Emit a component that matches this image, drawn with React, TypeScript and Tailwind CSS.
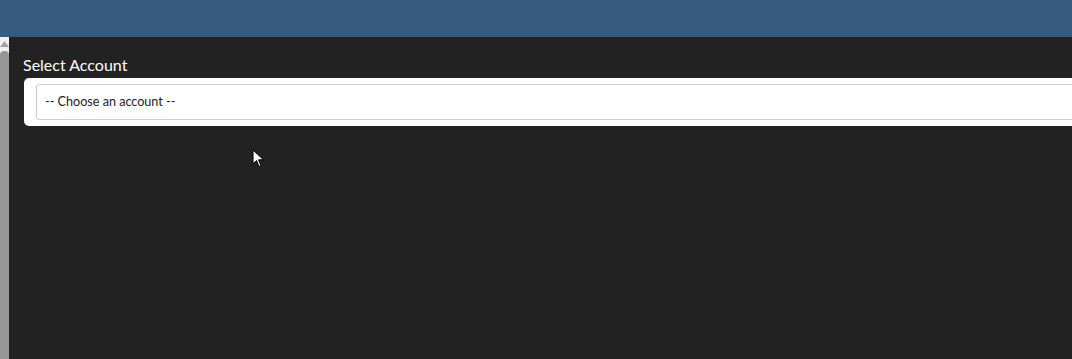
import { useState } from "react";

export default function App() {
  const [account, setAccount] = useState("");

  return (
    <div className="relative h-[359px] w-[1072px] overflow-hidden bg-[#222222] font-['Lato','Liberation_Sans',sans-serif]">
      <div className="h-[37px] bg-[#375a7f]" />
      <div className="flex h-[322px]">
        <div className="flex w-[11px] flex-col bg-[#f0f0f0]">
          <div className="flex h-[14px] w-[9px] items-center justify-center">
            <svg width="9" height="6" viewBox="0 0 9 6">
              <path d="M4.5 0 L9 6 L0 6 Z" fill="#a3a3a3" />
            </svg>
          </div>
          <div className="w-[9px] flex-1 rounded-t-[4px] bg-[#969696]" />
        </div>
        <div className="flex-1 pl-[15px] pt-[18px]">
          <label className="-ml-[1px] block text-[16px] leading-[20px] text-white">Select Account</label>
          <div className="mt-[3px] w-[1100px] rounded-[5px] bg-white py-[6px] pl-[12px]">
            <select
              value={account}
              onChange={(e) => setAccount(e.target.value)}
              className="h-[36px] w-full appearance-none rounded-[3px] border border-[#cccccc] bg-white pl-[8px] text-[12.6px] text-[#222222] outline-none"
            >
              <option value="">-- Choose an account --</option>
            </select>
          </div>
        </div>
      </div>
      <svg className="absolute left-[252px] top-[149px]" width="13" height="19" viewBox="0 0 13 19">
        <path d="M1 1 L1 15 L4.5 11.5 L7 17.5 L9 16.7 L6.5 10.8 L11.5 10.8 Z" fill="#ffffff" stroke="#000000" strokeWidth="1" />
      </svg>
    </div>
  );
}
